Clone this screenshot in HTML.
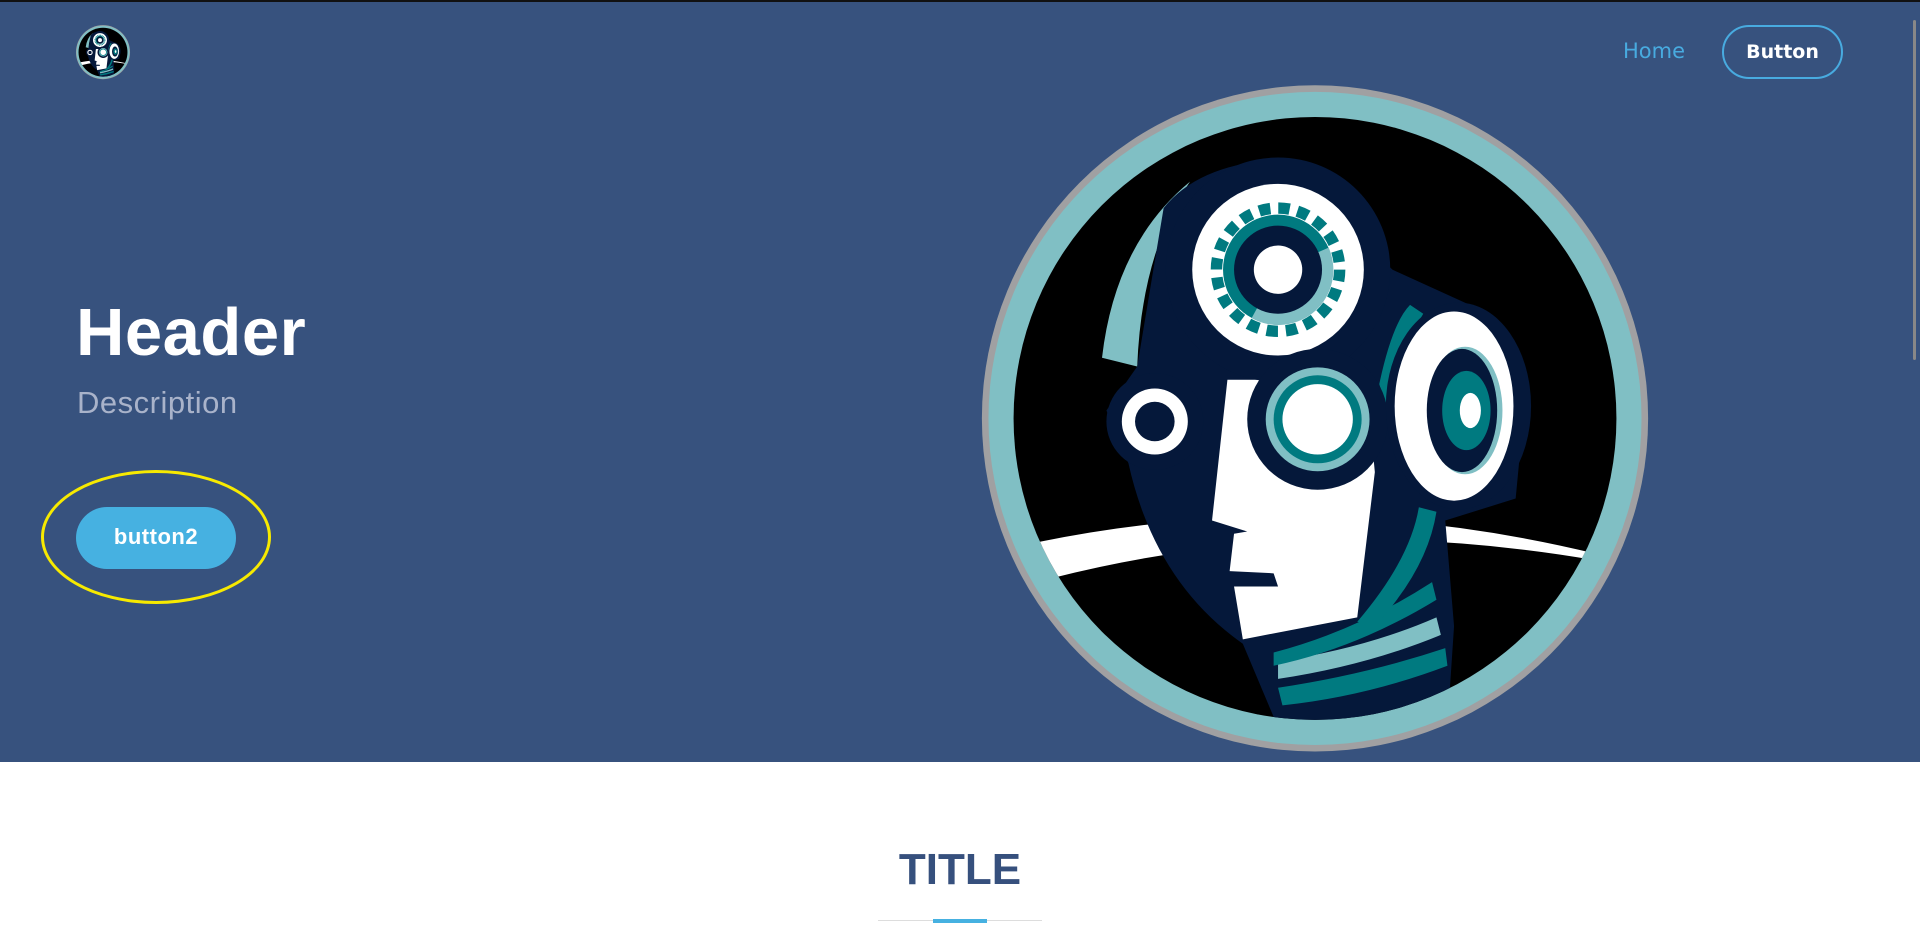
<!DOCTYPE html>
<html><head><meta charset="utf-8"><style>
html,body{margin:0;padding:0;width:1920px;height:951px;overflow:hidden;background:#fff;font-family:"Liberation Sans",sans-serif}
.hero{position:absolute;left:0;top:0;width:1920px;height:762px;background:#37527e;border-top:2px solid #111;box-sizing:border-box}
.home{position:absolute;left:1623px;top:37px;font-size:21px;color:#48abe0;font-family:"DejaVu Sans","Liberation Sans",sans-serif}
.btn{position:absolute;left:1722px;top:23px;width:121px;height:54px;box-sizing:border-box;border:2px solid #48abe0;border-radius:28px;color:#fff;font-weight:bold;font-size:19px;text-align:center;line-height:50px;font-family:"DejaVu Sans","Liberation Sans",sans-serif}
h1{position:absolute;left:76px;top:292px;margin:0;font-size:67px;color:#fff;font-weight:bold;letter-spacing:0.5px}
.desc{position:absolute;left:77px;top:383px;font-size:31px;color:#a9b3ca;letter-spacing:0.5px}
.b2{position:absolute;left:76px;top:505px;width:160px;height:62px;border-radius:31px;background:#46b1e1;color:#fff;font-size:22px;font-weight:bold;text-align:center;line-height:60px;letter-spacing:0.5px}
.ell{position:absolute;left:41px;top:468px;width:224px;height:128px;border:3px solid #f7ea00;border-radius:50%}
.title{position:absolute;left:0;width:1920px;top:845px;text-align:center;font-size:44px;font-weight:bold;color:#36507d}
.line{position:absolute;left:878px;top:920px;width:164px;height:1px;background:#ddd}
.line2{position:absolute;left:933px;top:919px;width:54px;height:4px;background:#46b1e1}
.sb{position:absolute;left:1913px;top:20px;width:3px;height:340px;background:#888;border-radius:2px}
</style></head><body>
<svg width="0" height="0" style="position:absolute">
<symbol id="robo" viewBox="0 0 1568 1545">
<defs><clipPath id="cp"><circle cx="784" cy="778" r="685"/></clipPath></defs>
<circle cx="784" cy="778" r="757" fill="#a0a0a2"/>
<circle cx="784" cy="778" r="742" fill="#80bfc4"/>
<circle cx="784" cy="778" r="685" fill="#000"/>
<g clip-path="url(#cp)">
<path d="M150,1060 Q780,930 1420,1085 L1420,1100 Q780,990 190,1140 Z" fill="#fff"/>
<path d="M500,240 Q330,380 300,640 L380,660 Q390,400 500,240 Z" fill="#80bfc4"/>
<path d="M440,300 Q520,200 700,190 L960,440 L1180,540 L1260,750 L1240,960 L1080,1010 L1100,1250 L1090,1400 L950,1460 L700,1480 L620,1290 Q420,1150 360,880 L310,760 L380,660 Z" fill="#05183a"/>
<path d="M700,1330 Q900,1300 1060,1230 L1070,1270 Q900,1340 700,1370 Z" fill="#80bfc4"/>
<path d="M700,1390 Q900,1360 1080,1300 L1085,1340 Q900,1410 710,1430 Z" fill="#007a80"/>
<path d="M690,1310 Q880,1260 1050,1150 L1060,1190 Q880,1300 690,1340 Z" fill="#007a80"/>
<path d="M930,700 Q960,560 1000,520 L1030,540 Q980,620 960,800 Z" fill="#007a80"/>
<path d="M880,1240 Q1000,1100 1020,980 L1060,990 Q1040,1120 920,1250 Z" fill="#007a80"/>
<path d="M585,690 L900,690 L920,900 L880,1230 L620,1280 L600,1160 L700,1160 L690,1130 L590,1125 L600,1040 L630,1035 L550,1010 Z" fill="#fff"/>
</g>
<circle cx="700" cy="440" r="255" fill="#05183a"/>
<circle cx="700" cy="440" r="195" fill="#fff"/>
<circle cx="700" cy="440" r="140" fill="none" stroke="#007a80" stroke-width="26" stroke-dasharray="26 18"/>
<circle cx="700" cy="440" r="125" fill="#007a80"/>
<path d="M815,390 A125,125 0 0 1 640,550 L700,440 Z" fill="#80bfc4"/>
<circle cx="700" cy="440" r="100" fill="#05183a"/>
<circle cx="700" cy="440" r="55" fill="#fff"/>
<circle cx="790" cy="780" r="160" fill="#05183a"/>
<circle cx="790" cy="780" r="118" fill="#80bfc4"/>
<circle cx="790" cy="780" r="100" fill="#007a80"/>
<circle cx="790" cy="780" r="80" fill="#fff"/>
<ellipse cx="1110" cy="750" rx="165" ry="235" fill="#05183a"/>
<ellipse cx="1100" cy="750" rx="135" ry="215" fill="#fff"/>
<ellipse cx="1125" cy="760" rx="85" ry="145" fill="#80bfc4"/>
<ellipse cx="1118" cy="760" rx="80" ry="140" fill="#05183a"/>
<ellipse cx="1128" cy="760" rx="55" ry="90" fill="#007a80"/>
<ellipse cx="1137" cy="760" rx="24" ry="40" fill="#fff"/>
<circle cx="420" cy="785" r="110" fill="#05183a"/>
<circle cx="420" cy="785" r="75" fill="#fff"/>
<circle cx="420" cy="785" r="45" fill="#05183a"/>
</symbol>
</svg>
<div class="hero">
<svg style="position:absolute;left:75px;top:22px" width="56" height="56"><use href="#robo"/></svg>
<div class="home">Home</div>
<div class="btn">Button</div>
<h1>Header</h1>
<div class="desc">Description</div>
<div class="ell"></div>
<div class="b2">button2</div>
<svg style="position:absolute;left:970px;top:74px" width="690" height="680"><use href="#robo"/></svg>
</div>
<div class="sb"></div>
<div class="title">TITLE</div>
<div class="line"></div>
<div class="line2"></div>
</body></html>
